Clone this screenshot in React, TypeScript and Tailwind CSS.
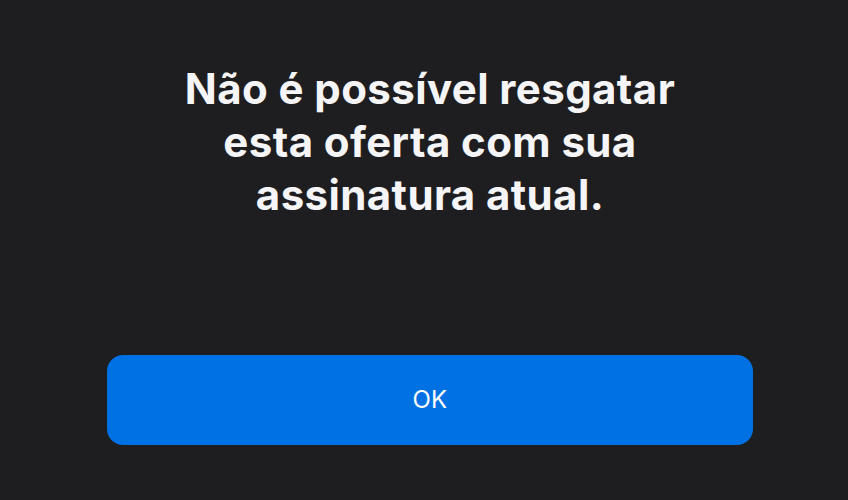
export default function App() {
  return (
    <div
      className="flex h-[500px] w-[848px] flex-col items-center bg-[#1e1e20] pl-[107px] pr-[95px] pt-[62px]"
      style={{ fontFamily: "Inter, 'Liberation Sans', sans-serif" }}
    >
      <h1 className="text-center text-[42px] font-bold leading-[53px] tracking-[0.4px] text-[#f5f5f7]">
        Não é possível resgatar
        <br />
        esta oferta com sua
        <br />
        assinatura atual.
      </h1>
      <button
        type="button"
        className="mt-[134px] flex h-[90px] w-full items-center justify-center rounded-[16px] bg-[#0071e3] text-[24px] font-normal tracking-[0.3px] text-white"
      >
        OK
      </button>
    </div>
  );
}
